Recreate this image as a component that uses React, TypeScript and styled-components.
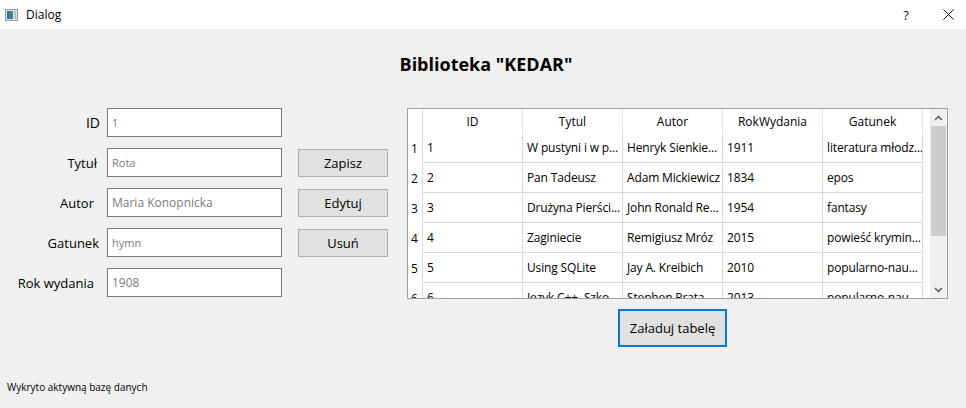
import React from "react";
import styled, { createGlobalStyle } from "styled-components";

const Global = createGlobalStyle`
  html, body { margin: 0; padding: 0; background: #f0f0f0; }
  body { font-family: "Open Sans", "Noto Sans", sans-serif; color: #000; }
  * { box-sizing: border-box; }
`;

const Window = styled.div`
  width: 966px;
  height: 408px;
  display: flex;
  flex-direction: column;
  background: #f0f0f0;
  overflow: hidden;
`;

const TitleBar = styled.div`
  height: 29px;
  background: #fff;
  display: flex;
  align-items: center;
  padding-left: 5px;
  font-size: 12px;
`;

const TitleText = styled.span`
  margin-left: 8px;
  flex: 1;
`;

const TitleButton = styled.div<{ $w: number }>`
  width: ${(p) => p.$w}px;
  height: 29px;
  display: flex;
  align-items: center;
  justify-content: center;
  font-size: 13px;
  color: #111;
`;

const Heading = styled.h1`
  margin: 23px 0 0 6px;
  text-align: center;
  font-size: 18px;
  line-height: 24px;
  font-weight: 700;
`;

const MainRow = styled.div`
  display: flex;
  align-items: flex-start;
  margin-top: 32px;
`;

const Form = styled.div`
  display: grid;
  grid-template-columns: 100px 175px 99px;
  grid-auto-rows: 29px;
  column-gap: 7px;
  row-gap: 11px;
`;

const Label = styled.label<{ $size?: number; $pad?: number }>`
  grid-column: 1;
  text-align: right;
  align-self: center;
  padding-right: ${(p) => p.$pad ?? 0}px;
  font-size: ${(p) => p.$size ?? 13}px;
  line-height: 18px;
`;

const Input = styled.input<{ $size?: number }>`
  grid-column: 2;
  height: 29px;
  border: 1px solid #7a7a7a;
  background: #fff;
  padding: 0 4px;
  font-family: inherit;
  font-size: ${(p) => p.$size ?? 12}px;
  outline: none;
  &::placeholder { color: #7b7b7b; }
`;

const SideButton = styled.button`
  grid-column: 3;
  justify-self: end;
  margin-top: 1px;
  height: 28px;
  width: 90px;
  background: #e1e1e1;
  border: 1px solid #adadad;
  font-family: inherit;
  font-size: 13px;
  color: #000;
  padding: 0;
`;

const TableColumn = styled.div`
  margin-left: 19px;
  display: flex;
  flex-direction: column;
`;

const TableFrame = styled.div`
  width: 541px;
  height: 191px;
  border: 1px solid #a0a0a0;
  background: #fff;
  display: flex;
  overflow: hidden;
`;

const Grid = styled.div`
  display: grid;
  grid-template-columns: 15px repeat(5, 100px);
  grid-template-rows: 24px;
  grid-auto-rows: 30px;
  width: 515px;
  font-size: 12px;
`;

const HeadCell = styled.div<{ $corner?: boolean }>`
  display: flex;
  align-items: center;
  justify-content: center;
  border-right: 1px solid ${(p) => (p.$corner ? "#d8d8d8" : "#e5e5e5")};
  white-space: nowrap;
`;

const RowNum = styled.div`
  display: flex;
  align-items: center;
  padding-left: 3px;
  border-right: 1px solid #d8d8d8;
`;

const Cell = styled.div`
  display: flex;
  align-items: center;
  padding-left: 4px;
  border-right: 1px solid #d8d8d8;
  border-bottom: 1px solid #d8d8d8;
  white-space: nowrap;
  overflow: hidden;
  letter-spacing: -0.15px;
`;

const Filler = styled.div`
  width: 7px;
`;

const ScrollBar = styled.div`
  width: 17px;
  background: #f0f0f0;
  display: flex;
  flex-direction: column;
  align-items: center;
`;

const Arrow = styled.div`
  height: 17px;
  width: 17px;
  display: flex;
  align-items: center;
  justify-content: center;
`;

const Thumb = styled.div`
  width: 15px;
  height: 110px;
  background: #cdcdcd;
`;

const Spacer = styled.div`
  flex: 1;
`;

const LoadButton = styled.button`
  margin-top: 10px;
  margin-left: 211px;
  width: 109px;
  height: 38px;
  background: #e1e1e1;
  border: 2px solid #0078d7;
  font-family: inherit;
  font-size: 13px;
  color: #000;
  padding: 0;
`;

const Status = styled.div`
  margin-top: auto;
  padding: 0 0 14px 7px;
  font-size: 10px;
  line-height: 14px;
`;

const rows = [
  ["1", "W pustyni i w p...", "Henryk Sienkie...", "1911", "literatura młodz..."],
  ["2", "Pan Tadeusz", "Adam Mickiewicz", "1834", "epos"],
  ["3", "Drużyna Pierści...", "John Ronald Re...", "1954", "fantasy"],
  ["4", "Zaginiecie", "Remigiusz Mróz", "2015", "powieść krymin..."],
  ["5", "Using SQLite", "Jay A. Kreibich", "2010", "popularno-nau..."],
  ["6", "Jezyk C++. Szko...", "Stephen Prata", "2013", "popularno-nau..."],
];

const headers = ["ID", "Tytul", "Autor", "RokWydania", "Gatunek"];

const Chevron = ({ up }: { up?: boolean }) => (
  <svg width="9" height="6" viewBox="0 0 9 6">
    <path
      d={up ? "M1 5 L4.5 1.5 L8 5" : "M1 1 L4.5 4.5 L8 1"}
      fill="none"
      stroke="#606060"
      strokeWidth="1.6"
    />
  </svg>
);

export default function App() {
  return (
    <>
      <Global />
      <Window>
        <TitleBar>
          <svg width="13" height="12" viewBox="0 0 13 12">
            <rect x="0.5" y="0.5" width="12" height="11" fill="#dfe6ea" stroke="#8a9aa6" />
            <rect x="2" y="2" width="6" height="8" fill="#3d8c7a" />
            <rect x="2" y="2" width="3" height="8" fill="#3b6fae" />
            <rect x="9" y="2" width="2" height="8" fill="#b8c4cc" />
          </svg>
          <TitleText>Dialog</TitleText>
          <TitleButton $w={48}>?</TitleButton>
          <TitleButton $w={36}>
            <svg width="11" height="11" viewBox="0 0 11 11">
              <path d="M0.5 0.5 L10.5 10.5 M10.5 0.5 L0.5 10.5" stroke="#111" strokeWidth="1" />
            </svg>
          </TitleButton>
        </TitleBar>
        <Heading>Biblioteka "KEDAR"</Heading>
        <MainRow>
          <Form>
            <Label $size={14}>ID</Label>
            <Input $size={11} placeholder="1" />
            <span />
            <Label $pad={3}>Tytuł</Label>
            <Input $size={11} placeholder="Rota" />
            <SideButton>Zapisz</SideButton>
            <Label $pad={6}>Autor</Label>
            <Input placeholder="Maria Konopnicka" />
            <SideButton>Edytuj</SideButton>
            <Label $pad={1}>Gatunek</Label>
            <Input $size={11} placeholder="hymn" />
            <SideButton>Usuń</SideButton>
            <Label $pad={6}>Rok wydania</Label>
            <Input placeholder="1908" />
          </Form>
          <TableColumn>
            <TableFrame>
              <Grid>
                <HeadCell $corner />
                {headers.map((h) => (
                  <HeadCell key={h}>{h}</HeadCell>
                ))}
                {rows.map((r, i) => (
                  <React.Fragment key={i}>
                    <RowNum>{i + 1}</RowNum>
                    {r.map((c, j) => (
                      <Cell key={j}>{c}</Cell>
                    ))}
                  </React.Fragment>
                ))}
              </Grid>
              <Filler />
              <ScrollBar>
                <Arrow>
                  <Chevron up />
                </Arrow>
                <Thumb />
                <Spacer />
                <Arrow>
                  <Chevron />
                </Arrow>
              </ScrollBar>
            </TableFrame>
            <LoadButton>Załaduj tabelę</LoadButton>
          </TableColumn>
        </MainRow>
        <Status>Wykryto aktywną bazę danych</Status>
      </Window>
    </>
  );
}
